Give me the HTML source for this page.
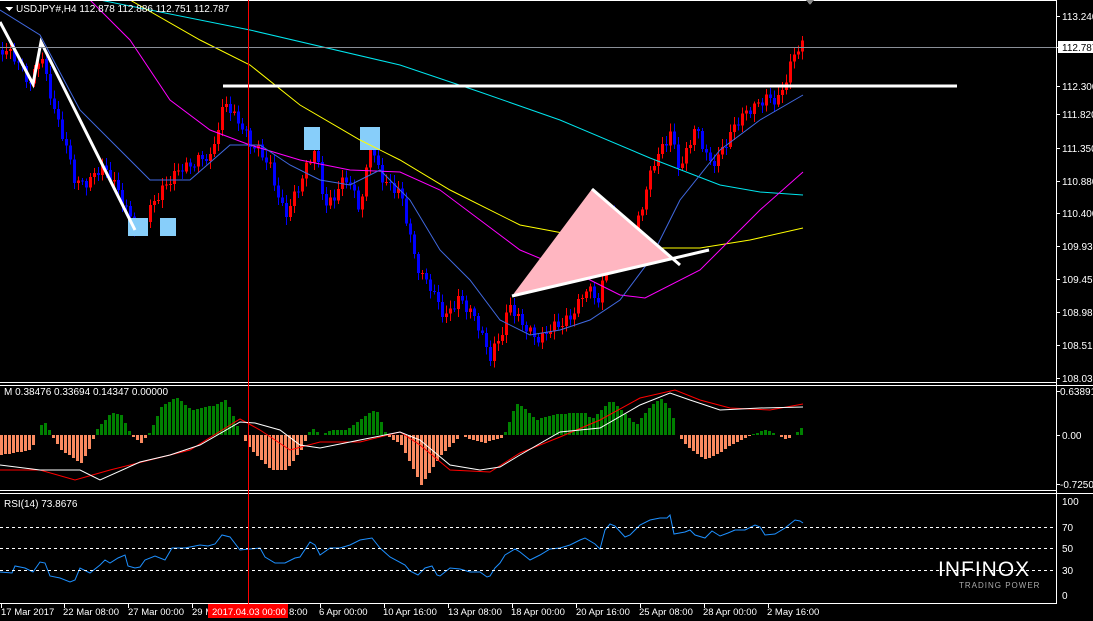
<!DOCTYPE html>
<html><head><meta charset="utf-8"><style>
html,body{margin:0;padding:0;background:#000;width:1093px;height:621px;overflow:hidden}
svg{display:block}
text{font-family:"Liberation Sans",sans-serif;font-size:10px;fill:#fff}
.bl text{font-size:9.5px}
</style></head><body>
<svg id="s" width="1093" height="621" viewBox="0 0 1093 621" xmlns="http://www.w3.org/2000/svg" shape-rendering="crispEdges">
<rect width="1093" height="621" fill="#000"/>
<g id="cand"></g>
<g id="hist"></g>
<g id="lines" fill="none" shape-rendering="auto"></g>
<g stroke="#fff" stroke-width="1" fill="none">
<line x1="0" y1="0.5" x2="1056" y2="0.5"/>
<line x1="1056.5" y1="0" x2="1056.5" y2="604"/>
<line x1="0" y1="382.5" x2="1056" y2="382.5"/>
<line x1="0" y1="385.5" x2="1093" y2="385.5"/>
<line x1="0" y1="490.5" x2="1056" y2="490.5"/>
<line x1="0" y1="493.5" x2="1093" y2="493.5"/>
<line x1="0" y1="603.5" x2="1056" y2="603.5"/>
</g>
<g stroke="#fff" stroke-dasharray="3,3">
<line x1="0" y1="527.5" x2="1056" y2="527.5"/>
<line x1="0" y1="548.5" x2="1056" y2="548.5"/>
<line x1="0" y1="570.5" x2="1056" y2="570.5"/>
</g>
<line x1="0" y1="47.5" x2="1056" y2="47.5" stroke="#8a8f98"/>
<line x1="248.5" y1="0" x2="248.5" y2="604" stroke="#f00"/>
<g stroke="#fff" id="ticks"></g>
<g>
<text x="1062" y="20">113.240</text>
<rect x="1058" y="41" width="35" height="12" fill="#fff"/>
<text x="1062" y="51" style="fill:#000">112.787</text>
<text x="1062" y="90">112.300</text>
<text x="1062" y="118">111.820</text>
<text x="1062" y="152">111.350</text>
<text x="1062" y="185">110.880</text>
<text x="1062" y="217">110.400</text>
<text x="1062" y="250">109.930</text>
<text x="1062" y="283">109.450</text>
<text x="1062" y="316">108.980</text>
<text x="1062" y="349">108.510</text>
<text x="1062" y="382">108.030</text>
<text x="1060" y="395">0.63891</text>
<text x="1062" y="439">0.00</text>
<text x="1060" y="488">-0.72506</text>
<text x="1062" y="505">100</text>
<text x="1062" y="531">70</text>
<text x="1062" y="552">50</text>
<text x="1062" y="574">30</text>
<text x="1062" y="599">0</text>
</g>
<g id="bt" stroke="#fff"></g>
<g class="bl">
<text x="1" y="615">17 Mar 2017</text>
<text x="63" y="615">22 Mar 08:00</text>
<text x="128" y="615">27 Mar 00:00</text>
<text x="192" y="615">29 M</text>
<text x="289" y="615">8:00</text>
<rect x="208" y="604" width="80" height="14" fill="#f00"/>
<text x="212" y="615">2017.04.03 00:00</text>
<text x="319" y="615">6 Apr 00:00</text>
<text x="383" y="615">10 Apr 16:00</text>
<text x="448" y="615">13 Apr 08:00</text>
<text x="511" y="615">18 Apr 00:00</text>
<text x="576" y="615">20 Apr 16:00</text>
<text x="639" y="615">25 Apr 08:00</text>
<text x="703" y="615">28 Apr 00:00</text>
<text x="767" y="615">2 May 16:00</text>
</g>
<polygon points="5,7 13,7 9,11" fill="#fff"/>
<text x="16" y="12">USDJPY#,H4  112.878 112.886 112.751 112.787</text>
<text x="4" y="395">M 0.38476 0.33694 0.14347 0.00000</text>
<text x="4" y="507">RSI(14) 73.8676</text>
<polygon points="806,0 814,0 810,5" fill="#888"/>
<text x="938" y="576" style="font-size:21px;letter-spacing:1px">INFINOX</text>
<text x="959" y="588" style="font-size:8px;fill:#aaa;letter-spacing:1px">TRADING POWER</text>
</svg>
<script>
(function(){
var NS="http://www.w3.org/2000/svg";
function el(p,t,a){var e=document.createElementNS(NS,t);for(var k in a)e.setAttribute(k,a[k]);p.appendChild(e);return e;}
function interp(pts,x){for(var i=1;i<pts.length;i++){if(x<=pts[i][0]){var a=pts[i-1],b=pts[i];return a[1]+(b[1]-a[1])*(x-a[0])/(b[0]-a[0]);}}return pts[pts.length-1][1];}
var L=document.getElementById('lines');
function pl(pts,c,w){el(L,'polyline',{points:pts.map(function(p){return p.join(',')}).join(' '),stroke:c,'stroke-width':w||1});}
var P=[[0,50],[30,80],[40,45],[55,120],[75,180],[100,170],[140,225],[160,200],[180,160],[210,165],[225,95],[240,120],[250,150],[270,165],[285,210],[300,190],[315,150],[325,200],[345,180],[360,215],[370,140],[385,180],[400,200],[415,260],[430,280],[445,325],[460,300],[475,310],[490,360],[500,345],[510,305],[525,320],[540,345],[555,330],[570,310],[585,290],[600,310],[610,210],[625,255],[640,220],[655,160],[670,125],[680,170],[695,135],[710,160],[725,140],[745,120],[765,90],[780,100],[800,45]];
var C=document.getElementById('cand');
var prev=interp(P,0);
for(var x=2;x<=803;x+=4){
 var c=interp(P,x)+Math.sin(x*1.7)*7+Math.sin(x*0.53)*5;
 var o=prev;var up=c<o;var col=up?'#f00':'#00f';
 var tp=Math.min(o,c),bt=Math.max(o,c);
 var hi=tp-2-Math.abs(Math.sin(x*2.3))*6,lo=bt+2+Math.abs(Math.cos(x*1.9))*6;
 el(C,'line',{x1:x+0.5,y1:hi,x2:x+0.5,y2:lo,stroke:col});
 el(C,'rect',{x:x-1,y:tp,width:3,height:Math.max(1,bt-tp),fill:col});
 prev=c;
}
[[128,218,20,18],[160,218,16,18],[304,127,16,23],[360,127,20,23]].forEach(function(r){el(C,'rect',{x:r[0],y:r[1],width:r[2],height:r[3],fill:'#87cefa'});});
pl([[100,0],[250,30],[400,65],[480,92],[560,120],[650,158],[720,185],[760,192],[803,195]],'#00e5ee');
pl([[130,0],[200,40],[250,65],[300,105],[360,140],[400,160],[450,190],[520,225],[600,240],[650,248],[700,248],[750,240],[803,228]],'#ffff00');
pl([[90,0],[130,40],[170,100],[210,130],[250,145],[300,160],[350,170],[400,172],[440,190],[480,220],[520,250],[580,275],[620,295],[645,298],[700,270],[760,210],[803,172]],'#ff00ff');
pl([[0,10],[40,35],[80,110],[120,150],[150,180],[190,180],[230,145],[260,145],[290,165],[320,180],[350,185],[380,170],[410,200],[440,250],[470,280],[500,320],[530,335],[560,330],[590,320],[620,300],[650,260],[680,200],[720,150],[760,120],[803,95]],'#4169e1');
el(L,'polygon',{points:'512,296 592,189 672,258 610,272',fill:'#ffb6c1'});
pl([[0,22],[33,84],[41,42],[135,230]],'#fff',3);
pl([[223,86],[957,86]],'#fff',3);
pl([[512,296],[709,250]],'#fff',3);
pl([[592,189],[680,265]],'#fff',3);
var H=[[0,-20],[30,-15],[40,10],[45,12],[50,0],[60,-15],[75,-25],[80,-28],[90,-10],[95,5],[110,22],[120,20],[130,0],[140,-8],[150,5],[160,28],[175,38],[190,25],[215,30],[225,35],[240,0],[250,-15],[270,-35],[285,-35],[300,-15],[310,8],[320,0],[330,5],[345,5],[365,20],[375,25],[385,0],[400,-10],[410,-30],[420,-50],[430,-35],[440,-20],[450,-10],[460,0],[470,-5],[485,-8],[490,-5],[500,-3],[505,5],[515,32],[525,25],[535,15],[550,20],[570,22],[585,22],[590,15],[600,25],[610,35],[620,25],[635,10],[650,30],[660,36],[670,25],[676,0],[690,-15],[705,-25],[715,-20],[730,-10],[745,-3],[755,2],[765,5],[775,0],[785,-5],[795,2],[803,10]];
var HG=document.getElementById('hist');
for(var x2=0;x2<=803;x2+=4){var v=Math.round(interp(H,x2));if(v>0)el(HG,'rect',{x:x2,y:435-v,width:3,height:v,fill:'#008000'});else if(v<0)el(HG,'rect',{x:x2,y:435,width:3,height:-v,fill:'#fa8a60'});}
pl([[0,470],[40,470],[75,480],[110,470],[150,460],[190,450],[240,419],[260,430],[290,450],[320,442],[360,442],[400,432],[420,445],[450,470],[490,472],[520,453],[560,437],[600,420],[640,398],[675,390],[700,400],[730,408],[770,410],[803,404]],'#f00');
pl([[0,465],[40,470],[80,470],[100,480],[140,462],[170,455],[200,445],[240,422],[255,423],[280,430],[300,445],[320,448],[360,440],[400,432],[420,440],[450,465],[480,470],[500,467],[520,455],[560,432],[600,428],[640,405],[670,393],[690,400],[720,410],[760,408],[803,407]],'#fff');
pl([[0,572],[12,573],[15,566],[25,568],[33,572],[40,562],[45,563],[50,576],[60,578],[70,582],[75,580],[80,568],[90,573],[100,565],[105,560],[110,563],[118,558],[125,555],[128,566],[135,568],[140,567],[145,560],[155,556],[165,560],[172,548],[185,548],[195,546],[200,545],[208,546],[215,544],[222,535],[230,537],[240,550],[250,549],[260,548],[265,557],[275,563],[285,563],[295,558],[300,557],[310,542],[315,545],[320,555],[330,548],[340,548],[350,545],[360,540],[372,538],[380,548],[390,557],[405,565],[410,571],[418,575],[425,568],[432,566],[437,575],[440,576],[450,568],[460,569],[470,572],[480,572],[487,577],[490,576],[495,568],[500,563],[505,555],[515,549],[520,552],[530,560],[540,555],[550,549],[560,548],[570,545],[580,540],[585,538],[595,544],[600,549],[605,530],[610,524],[615,526],[625,537],[630,535],[640,525],[650,520],[660,518],[667,518],[670,515],[674,534],[685,532],[690,530],[695,535],[705,538],[712,531],[720,536],[728,533],[735,530],[745,530],[755,525],[760,527],[765,535],[775,534],[785,528],[790,524],[795,520],[800,521],[803,523]],'#1e90ff');
var T=document.getElementById('ticks');
[16,47,86,114,148,181,213,246,279,312,345,378,391,435,484].forEach(function(y){el(T,'line',{x1:1056,y1:y+0.5,x2:1060,y2:y+0.5});});
var B=document.getElementById('bt');
[1,64,128,192,256,320,384,448,512,576,640,704,768].forEach(function(x){el(B,'line',{x1:x+0.5,y1:603,x2:x+0.5,y2:608});});
})();
</script>
</body></html>
